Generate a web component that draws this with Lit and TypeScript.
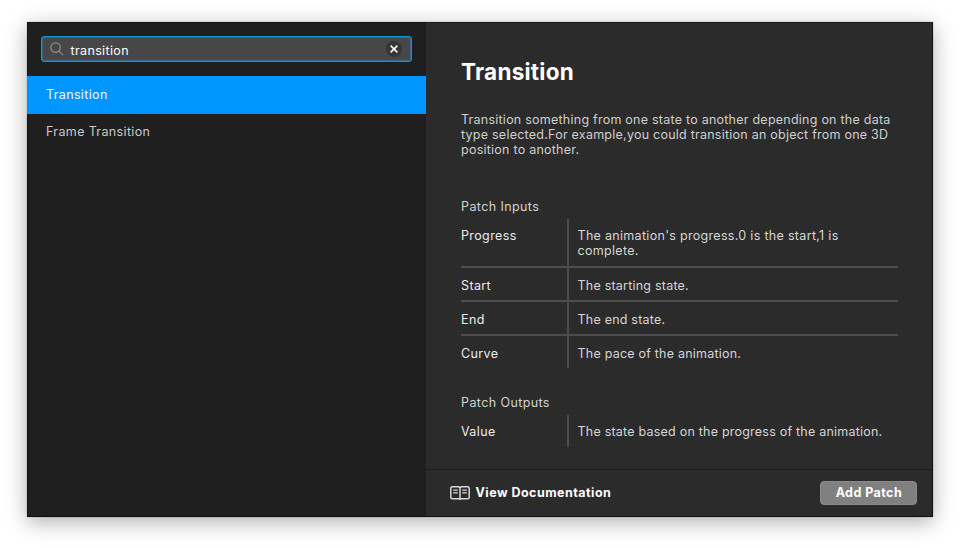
import { LitElement, html, css, svg } from "lit";
import { customElement, property, state } from "lit/decorators.js";
import { classMap } from "lit/directives/class-map.js";

interface Port {
  name: string;
  text: string[];
}

const searchIcon = svg`<circle cx="5.6" cy="5.6" r="4.7" /><path d="M9.1 9.1 L12.6 12.6" />`;

@customElement("port-table")
export class PortTable extends LitElement {
  @property() heading = "";
  @property({ attribute: false }) ports: Port[] = [];

  static styles = css`
    :host { display: block; }
    .heading { height: 15px; margin-bottom: 5px; color: #d2d2d2; letter-spacing: 0.4px; }
    .row { display: flex; border-bottom: 2px solid #4d4d4d; }
    .row:last-child { border-bottom: 0; }
    .name { width: 106px; padding: 10px 0 7px; line-height: 15px; color: #ececec; letter-spacing: 0.38px; }
    .text {
      flex: 1; padding: 10px 0 7px 8.5px; line-height: 15px; letter-spacing: 0.22px;
      border-left: 2px solid #4d4d4d; margin-bottom: -2px; color: #d6d6d6;
    }
    .text.multi { letter-spacing: 0.31px; }
    .row:last-child .text { margin-bottom: 0; }
    .row:not(:last-child) .text { padding-bottom: 9px; }
    .row:first-child .name { padding-top: 9px; }
    .row:first-child .text { padding-top: 9px; padding-bottom: 8px; }
    .row:first-child:not(:last-child) .text { padding-bottom: 10px; }
    .line { white-space: nowrap; }
  `;

  render() {
    return html`
      <div class="heading">${this.heading}</div>
      <div>
        ${this.ports.map(
          (p) => html`<div class="row">
            <div class="name">${p.name}</div>
            <div class=${classMap({ text: true, multi: p.text.length > 1 })}>
              ${p.text.map((l) => html`<div class="line">${l}</div>`)}
            </div>
          </div>`
        )}
      </div>
    `;
  }
}

@customElement("app-root")
export class AppRoot extends LitElement {
  @state() private selected = 0;

  private results = ["Transition", "Frame Transition"];
  private description = [
    "Transition something from one state to another depending on the data",
    "type selected.For example,you could transition an object from one 3D",
    "position to another.",
  ];
  private inputs: Port[] = [
    { name: "Progress", text: ["The animation's progress.0 is the start,1 is", "complete."] },
    { name: "Start", text: ["The starting state."] },
    { name: "End", text: ["The end state."] },
    { name: "Curve", text: ["The pace of the animation."] },
  ];
  private outputs: Port[] = [{ name: "Value", text: ["The state based on the progress of the animation."] }];

  static styles = css`
    :host {
      display: block; box-sizing: border-box; width: 960px; height: 548px;
      padding: 22px 27px 0; background: #fff; overflow: hidden;
      font: 400 12.5px/15px Inter, "Liberation Sans", sans-serif; letter-spacing: 0.36px;
    }
    .window {
      display: flex; box-sizing: border-box; width: 906.4px; height: 495px; background: #2b2b2b;
      box-shadow: 0 0 1px rgba(0, 0, 0, 0.4), 0 5px 20px rgba(0, 0, 0, 0.32);
    }
    .sidebar {
      flex: none; width: 399px; background: #1f1f1f;
      box-shadow: inset 1px 0 #161616, inset 0 1px #161616, inset 0 -1px #0c0c0c;
    }
    .search {
      display: flex; align-items: center; box-sizing: border-box; width: 371px; height: 26px;
      margin: 14px 0 14px 14px; padding: 0 9px 0 8px;
      border: 1px solid #168fd9; border-radius: 3px; background: #474747;
      box-shadow: inset 0 0 0 0.5px #168fd9;
    }
    .lens { width: 14px; height: 14px; fill: none; stroke: #8b8b8b; stroke-width: 1.3; stroke-linecap: round; }
    .query { flex: 1; margin-left: 6.5px; padding-top: 2px; color: #fff; letter-spacing: 0.36px; }
    .clear { width: 16px; height: 16px; }
    .result {
      display: flex; align-items: center; box-sizing: border-box; height: 37.5px;
      padding: 0 0 1px 19px; color: #c9c9c9;
    }
    .result.on { background: #0096ff; color: #f2f9ff; }
    .details {
      flex: 1; min-width: 0; display: flex; flex-direction: column;
      box-shadow: inset 0 1px #1d1d1d, inset -1px -1px #101010;
    }
    .content { height: 447px; box-sizing: border-box; padding: 36px 35.4px 0 35px; }
    .title { margin: 0; font-size: 22.5px; line-height: 28px; font-weight: 700; letter-spacing: 0.25px; color: #fff; }
    .about { margin-top: 26px; line-height: 15.2px; color: #cfcfcf; white-space: nowrap; letter-spacing: 0.24px; }
    .inputs { margin-top: 41.4px; }
    .outputs { margin-top: 27px; }
    .footer {
      flex: 1; display: flex; align-items: center; justify-content: space-between;
      border-top: 1px solid #1c1c1c; padding: 0 16px 1px 24px;
    }
    .docs { display: flex; align-items: center; gap: 5.5px; font-weight: 700; color: #fff; letter-spacing: 0.47px; }
    .docs span { padding-bottom: 1px; }
    .book { width: 20px; height: 14px; }
    .add {
      display: flex; align-items: center; justify-content: center; box-sizing: border-box;
      width: 97px; height: 24px; padding: 0 0 1px; border: 1px solid #8b8b8b; border-radius: 4px;
      background: #808080; color: #fff; font: inherit; font-weight: 700; letter-spacing: 0.44px;
    }
  `;

  render() {
    return html`
      <div class="window">
        <div class="sidebar">
          <div class="search">
            <svg class="lens" viewBox="0 0 14 14">${searchIcon}</svg>
            <span class="query">transition</span>
            <svg class="clear" viewBox="0 0 16 16">
              <circle cx="8" cy="8" r="8" fill="#363636" />
              <path d="M4.6 4.6 L11.4 11.4 M11.4 4.6 L4.6 11.4" stroke="#fff" stroke-width="1.5" />
            </svg>
          </div>
          ${this.results.map(
            (r, i) => html`<div
              class=${classMap({ result: true, on: i === this.selected })}
              @click=${() => (this.selected = i)}
            ><span>${r}</span></div>`
          )}
        </div>
        <div class="details">
          <div class="content">
            <h1 class="title"><span>Transition</span></h1>
            <div class="about">${this.description.map((l) => html`<div>${l}</div>`)}</div>
            <port-table class="inputs" heading="Patch Inputs" .ports=${this.inputs}></port-table>
            <port-table class="outputs" heading="Patch Outputs" .ports=${this.outputs}></port-table>
          </div>
          <div class="footer">
            <div class="docs">
              <svg class="book" viewBox="0 0 20 14" fill="none" stroke="#d8d8d8">
                <path d="M10 1.8 Q9.2 .8 8 .8 H2.2 Q.8 .8 .8 2.2 V11.4 Q.8 12.8 2.2 12.8 H8.6 L10 13.3 L11.4 12.8 H17.8 Q19.2 12.8 19.2 11.4 V2.2 Q19.2 .8 17.8 .8 H12 Q10.8 .8 10 1.8 V13" stroke-width="1.5" />
                <path d="M3.2 4.2 H7.8 M3.2 6.8 H7.8 M12.2 4.2 H16.8 M12.2 6.8 H16.8" stroke-width="1.2" />
              </svg>
              <span>View Documentation</span>
            </div>
            <button class="add"><span>Add Patch</span></button>
          </div>
        </div>
      </div>
    `;
  }
}
